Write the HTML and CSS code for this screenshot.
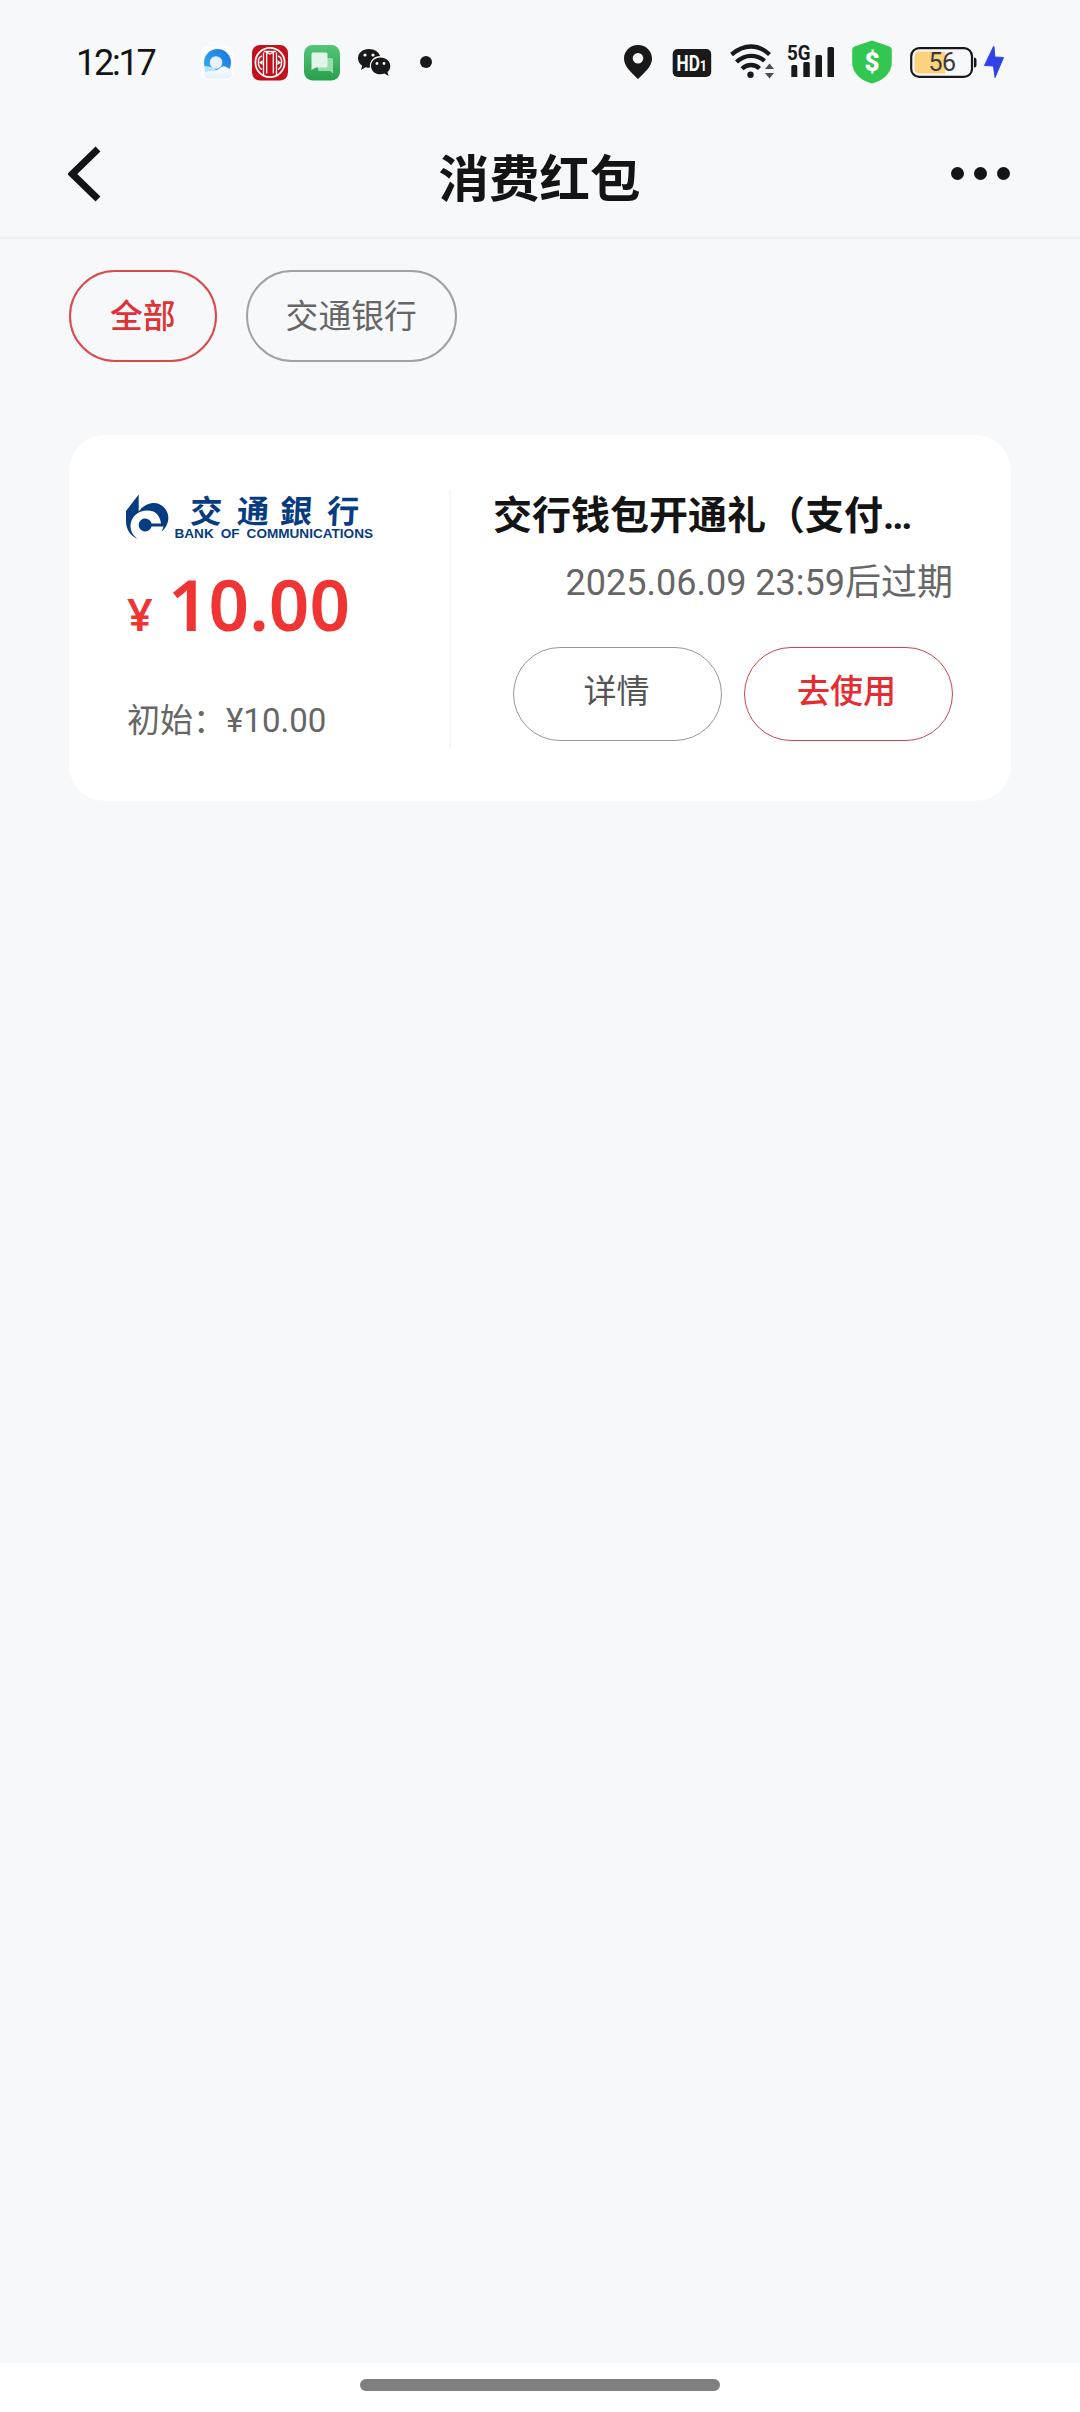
FILE: index.html
```html
<!DOCTYPE html>
<html lang="zh-CN">
<head>
<meta charset="utf-8">
<title>消费红包</title>
<link rel="stylesheet" href="styles.css">
</head>
<body>
<div class="screen">
  <div class="status">
    <span class="time">12:17</span>
    <div class="apps">
      <svg viewBox="200 40 36 44" width="36" height="44">
        <defs>
          <linearGradient id="sky" x1="0" y1="1" x2="1" y2="0"><stop offset="0" stop-color="#35b4f5"/><stop offset="1" stop-color="#1672e0"/></linearGradient>
          <linearGradient id="cloud" x1="0" y1="0" x2="0" y2="1"><stop offset="0" stop-color="#fff"/><stop offset="1" stop-color="#e3effa"/></linearGradient>
        </defs>
        <rect x="201" y="46" width="33" height="34" rx="8" fill="#fcfdfe"/>
        <circle cx="217.500" cy="62.500" r="13.500" fill="url(#sky)"/>
        <path d="M204.500 66Q208 66 214 68L222 78H212Q204 76 204.500 66Z" fill="#b5e2fc"/>
        <circle cx="216" cy="62.500" r="6.300" fill="#e6f1fb"/>
        <path d="M204 75Q205 71 211 71Q216 71 219 69Q223 64 228 68Q233 70 232 76Q230 78.500 226 78.500H210Q204 78.500 204 75Z" fill="url(#cloud)"/>
      </svg>
      <svg viewBox="252 40 36 44" width="36" height="44">
        <rect x="252" y="45" width="36" height="35.500" rx="8" fill="#c3101b"/>
        <circle cx="270" cy="62.500" r="14.600" fill="none" stroke="#fff" stroke-width="1.800"/>
        <path d="M264 51.500H276M266.700 52V73.500M273.300 52V73.500M263.500 52.500V75M276.500 52.500V75M264 51L270 54L276 51" fill="none" stroke="#fff" stroke-width="1.300"/>
        <path d="M262 56Q258 57 258.500 62.500Q258.500 68 262 69.500M278 56Q282 57 281.500 62.500Q281.500 68 278 69.500" fill="none" stroke="#fff" stroke-width="1.400"/>
        <path d="M259 62.500L262.500 60V65ZM281 62.500L277.500 60V65Z" fill="#fff"/>
      </svg>
      <svg viewBox="304 40 36 44" width="36" height="44">
        <defs><linearGradient id="msg" x1="0" y1="0" x2="0" y2="1"><stop offset="0" stop-color="#55c578"/><stop offset="1" stop-color="#27a04c"/></linearGradient></defs>
        <rect x="304" y="45" width="36" height="35.500" rx="8.500" fill="url(#msg)"/>
        <path d="M318 58H331.500Q333 58 333 59.500V83" fill="none"/>
        <path d="M318 58H331.500Q333 58 333 59.500V73.500L330 71H319.500Q318 71 318 69.500Z" fill="#9adbb0"/>
        <path d="M312.500 52.500H326Q327.500 52.500 327.500 54V66Q327.500 67.500 326 67.500H316L311.500 70V54Q311.500 52.500 312.500 52.500Z" fill="#e2f5e8"/>
      </svg>
      <svg viewBox="356 40 36 44" width="36" height="44">
        <path d="M369 49C362.500 49 358 53 358 58.300C358 61.300 359.600 64 362.200 65.700L361 70L365.500 67.300C367 67.700 368.500 67.700 370 67.500C369 60.500 374.500 56 380 56C379 52 374.500 49 369 49Z" fill="#191919"/>
        <path d="M380.500 57.500C375 57.500 371 61.200 371 66C371 70.800 375 74.300 380.500 74.300C382 74.300 383.300 74 384.500 73.500L388.500 76L387.500 72C389.300 70.500 390.300 68.500 390.300 66C390.300 61.200 386 57.500 380.500 57.500Z" fill="#191919"/>
        <g fill="#f6f8fa"><circle cx="365" cy="55" r="1.600"/><circle cx="373" cy="55" r="1.600"/><circle cx="377" cy="63.500" r="1.400"/><circle cx="384" cy="63.500" r="1.400"/></g>
      </svg>
      <svg viewBox="408 40 36 44" width="36" height="44"><circle cx="426" cy="62" r="6" fill="#191919"/></svg>
    </div>
    <div class="system">
      <svg viewBox="624 40 28 44" width="28" height="44">
        <path fill-rule="evenodd" d="M638 45C630 45 624 51 624 58.500C624 66.500 631 72 638 79C645 72 652 66.500 652 58.500C652 51 646 45 638 45ZM638 53A5.300 5.300 0 1 1 638 63.600A5.300 5.300 0 1 1 638 53Z" fill="#191919"/>
      </svg>
      <svg viewBox="670 40 42 44" width="42" height="44">
        <rect x="672.700" y="49" width="38.500" height="28" rx="5" fill="#191919"/>
        <text class="hd" transform="translate(676.500 71) scale(.8 1)" font-size="21.500">HD<tspan font-size="15.500">1</tspan></text>
      </svg>
      <svg class="overflowing" viewBox="730 40 40 44" width="40" height="44" fill="none">
        <path d="M731.500 54.500Q741 46.500 751 46.500Q761 46.500 769.500 54.500M736.500 62Q743 55.800 751 55.800Q759 55.800 764.500 61M742 68.800Q746 65 751 65Q756 65 759.500 68.500" stroke="#191919" stroke-width="4.300"/>
        <circle cx="750.500" cy="74.700" r="3.200" fill="#191919"/>
        <path d="M769.500 63.500L774 69H765ZM769.500 78.500L765 73H774Z" fill="#4c4d50"/>
      </svg>
      <svg class="overflowing" viewBox="788 40 46 44" width="46" height="44">
        <text class="net" x="787" y="60" font-size="21" textLength="23.500" lengthAdjust="spacingAndGlyphs">5G</text>
        <path d="M791.300 66.500q0-1.500 1.500-1.500h3q1.500 0 1.500 1.500V77h-6ZM803.300 63.500q0-1.500 1.500-1.500h3.500q1.500 0 1.500 1.500V77h-6.500ZM815.500 56.500q0-1.500 1.500-1.500h3.500q1.500 0 1.500 1.500V77h-6.500ZM827.500 48.500q0-1.500 1.500-1.500h3.500q1.500 0 1.500 1.500V77h-6.500Z" fill="#191919"/>
      </svg>
      <svg viewBox="852 40 40 44" width="40" height="44">
        <path d="M872 40.500L889.500 46.500Q891.800 47.300 891.800 50V62Q891.800 70.500 885.500 76.500Q880 81.500 872 83.500Q864 81.500 858.500 76.500Q852.200 70.500 852.200 62V50Q852.200 47.300 854.500 46.500Z" fill="#32c750"/>
        <text class="dollar" x="872" y="71" text-anchor="middle" font-size="26">$</text>
      </svg>
      <svg viewBox="910 40 95 44" width="95" height="44">
        <rect x="911.200" y="48.200" width="60.800" height="28.700" rx="8" fill="none" stroke="#191919" stroke-width="2.200"/>
        <path d="M945 51.500V73.500H920Q914.500 73.500 914.500 69V56.500Q914.500 51.500 920 51.500Z" fill="#fbd27e"/>
        <path d="M974 57.500Q976.500 57.500 976.500 60V65Q976.500 67.500 974 67.500Z" fill="#191919"/>
        <text class="percent" x="928.500" y="71" font-size="25" textLength="27.500">56</text>
        <path d="M993.500 46.500L984.500 65.500L993.500 66L995 77.500L1003.500 57.500L994.800 57L994 46.500Z" fill="#2f42e8" stroke="#2f42e8"/>
      </svg>
    </div>
  </div>

  <header class="nav">
    <svg class="back" viewBox="68 145 34 58" width="34" height="58"><path d="M98 149L72.300 174L98 199" fill="none" stroke="#141414" stroke-width="7"/></svg>
    <h1 class="heading">消费红包</h1>
    <div class="more"><i></i><i></i><i></i></div>
  </header>

  <main class="content">
    <div class="filters">
      <span class="chip chip-on">全部</span>
      <span class="chip">交通银行</span>
    </div>

    <section class="card">
      <div class="value">
        <svg class="logo overflowing" viewBox="126 490 250 52" width="250" height="52" fill="#083c82">
          <path d="M126 511L138.700 494.500V511.500C144 504 153 501.500 159 504C167 507.500 170 516 167.500 523C166 527.500 163.500 530 161.500 531.500C162.500 529.500 163 528 163.500 526.500H151.500A6.500 6.500 0 1 1 151.500 523.500H161C160 515 155 510.500 147.500 510.500C137 510.500 130.500 518 130.500 526C130.500 532 134 536 137.500 539C130 535.500 126 529 126 521Z"/>
          <text class="brand" transform="translate(0 523) skewX(-3)" x="189.500 236.500 279.500 326.500" y="0" font-size="32">交通銀行</text>
          <text class="brand-en" x="174.500" y="538.300" font-size="12.500" textLength="198.500" lengthAdjust="spacingAndGlyphs">BANK OF COMMUNICATIONS</text>
        </svg>
        <div class="amount"><span class="yen">¥</span><span class="number">10.00</span></div>
        <div class="initial">初始：¥10.00</div>
      </div>
      <div class="details">
        <h2 class="name">交行钱包开通礼（支付<span class="dots">...</span></h2>
        <p class="expiry">2025.06.09 23:59后过期</p>
        <div class="actions">
          <span class="btn">详情</span>
          <span class="btn btn-use">去使用</span>
        </div>
      </div>
    </section>
  </main>

  <footer class="homebar"><i></i></footer>
</div>
</body>
</html>
```
FILE: styles.css
```css
* { box-sizing: border-box; }

body {
  margin: 0;
  background: #f7f8fa;
  font-family: Roboto, "Noto Sans CJK SC", sans-serif;
  color: #141414;
}

svg { display: block; flex: none; }

.screen {
  width: 1080px;
  height: 2412px;
  display: flex;
  flex-direction: column;
}

.status {
  height: 100px;
  padding: 40px 75px 0 76px;
  display: flex;
}
.time {
  width: 124px;
  line-height: 46px;
  font-size: 36px;
  letter-spacing: -2.2px;
}
.apps { display: flex; gap: 16px; }
.system { display: flex; gap: 18px; margin-left: auto; }
.overflowing { overflow: visible; }
.hd { font-family: Roboto, sans-serif; font-weight: 700; fill: #fff; }
.net { font-family: Roboto, sans-serif; font-weight: 700; fill: #191919; }
.dollar { font-family: Roboto, sans-serif; font-weight: 900; fill: #fff; }
.percent { font-family: Roboto, sans-serif; fill: #3c3a38; }
.brand { font-family: "Noto Sans CJK TC", sans-serif; font-weight: 700; }
.brand-en { font-family: "Liberation Sans", sans-serif; font-weight: 700; word-spacing: 3px; }

.nav {
  height: 139px;
  padding: 0 70px 0 68px;
  border-bottom: 2px solid #eeeff1;
  display: flex;
  justify-content: space-between;
}
.back { margin-top: 45px; }
.heading {
  width: 204px;
  margin: 45px 0 0 26px;
  font-size: 50.5px;
  line-height: 70px;
  font-weight: 700;
  white-space: nowrap;
  text-align: center;
}
.more { display: flex; gap: 10px; padding-top: 67px; }
.more i { width: 13px; height: 13px; border-radius: 50%; background: #141414; }

.content { flex: 1; padding: 31px 69px 0; }

.filters { display: flex; gap: 29px; }
.chip {
  height: 92px;
  padding: 1px 38px;
  border: 2px solid #a0a1a4;
  border-radius: 46px;
  font-size: 32.8px;
  line-height: 88px;
  color: #666;
}
.chip-on { padding: 1px 39px; border-color: #d94a4c; color: #dd3336; font-weight: 500; }

.card {
  margin-top: 73px;
  height: 366px;
  padding: 55px 58px 54px 57px;
  border-radius: 36px;
  background: #fff;
  display: flex;
}
.value {
  width: 325px;
  border-right: 2px solid #f7f7f9;
}
.amount {
  height: 100px;
  padding: 0 0 0 1px;
  display: flex;
  align-items: baseline;
  font-family: "Noto Sans", sans-serif;
  font-weight: 600;
  color: #f03434;
  line-height: 124px;
}
.yen { width: 41px; font-size: 45px; }
.number { font-size: 71px; letter-spacing: 0; }
.initial { margin-top: 55px; padding-left: 1px; font-size: 33px; line-height: 48px; color: #666; }

.details { flex: 1; padding-left: 42px; }
.name {
  margin: 0;
  font-size: 39px;
  line-height: 52px;
  font-weight: 700;
  white-space: nowrap;
}
.dots { letter-spacing: -2.2px; }
.expiry {
  margin: 16px 0 0;
  font-size: 36px;
  line-height: 50px;
  color: #666;
  text-align: right;
}
.actions { display: flex; justify-content: flex-end; gap: 22px; margin-top: 39px; }
.btn {
  width: 209px;
  height: 94px;
  padding-right: 2px;
  border: 1px solid #96979a;
  border-radius: 47px;
  font-size: 33px;
  line-height: 87px;
  text-align: center;
  color: #555;
}
.btn-use { padding-right: 4px; border-color: #cb4549; color: #e62c31; font-weight: 500; }

.homebar {
  height: 49px;
  padding-top: 16px;
  background: #fff;
  display: flex;
  justify-content: center;
}
.homebar i { width: 360px; height: 12px; border-radius: 6px; background: #808080; }
```
